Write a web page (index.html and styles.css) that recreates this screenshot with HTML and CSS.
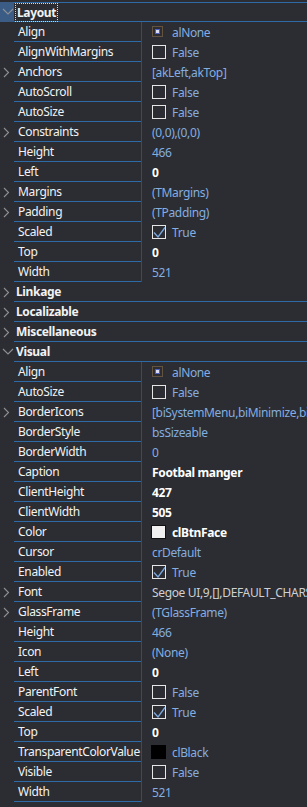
FILE: index.html
```html
<!DOCTYPE html>
<html>
<head>
<meta charset="utf-8">
<link rel="stylesheet" href="styles.css">
</head>
<body>
<div class="inspector">
  <div class="cat first selected">
    <div class="gutter"><svg class="chev" width="12" height="8" viewBox="0 0 12 8"><polyline points="1,1 6,6 11,1"/></svg></div>
    <div class="cat-name"><span class="focus">Layout</span></div>
  </div>

  <div class="row"><div class="gutter"></div><div class="name">Align</div><div class="value"><svg class="align-ic" width="12" height="12" viewBox="0 0 12 12"><rect x="0.5" y="0.5" width="10" height="10" class="dots"/><rect x="3.5" y="3.5" width="4" height="4" class="core"/></svg><span>alNone</span></div></div>
  <div class="row"><div class="gutter"></div><div class="name">AlignWithMargins</div><div class="value"><span class="cb"></span><span>False</span></div></div>
  <div class="row"><div class="gutter"><svg class="chev" width="7" height="11" viewBox="0 0 7 11"><polyline points="1,1 5.5,5.5 1,10"/></svg></div><div class="name">Anchors</div><div class="value"><span>[akLeft,akTop]</span></div></div>
  <div class="row"><div class="gutter"></div><div class="name">AutoScroll</div><div class="value"><span class="cb"></span><span>False</span></div></div>
  <div class="row"><div class="gutter"></div><div class="name">AutoSize</div><div class="value"><span class="cb"></span><span>False</span></div></div>
  <div class="row"><div class="gutter"><svg class="chev" width="7" height="11" viewBox="0 0 7 11"><polyline points="1,1 5.5,5.5 1,10"/></svg></div><div class="name">Constraints</div><div class="value"><span>(0,0),(0,0)</span></div></div>
  <div class="row"><div class="gutter"></div><div class="name">Height</div><div class="value"><span>466</span></div></div>
  <div class="row"><div class="gutter"></div><div class="name">Left</div><div class="value"><span class="bold">0</span></div></div>
  <div class="row"><div class="gutter"><svg class="chev" width="7" height="11" viewBox="0 0 7 11"><polyline points="1,1 5.5,5.5 1,10"/></svg></div><div class="name">Margins</div><div class="value"><span>(TMargins)</span></div></div>
  <div class="row"><div class="gutter"><svg class="chev" width="7" height="11" viewBox="0 0 7 11"><polyline points="1,1 5.5,5.5 1,10"/></svg></div><div class="name">Padding</div><div class="value"><span>(TPadding)</span></div></div>
  <div class="row"><div class="gutter"></div><div class="name">Scaled</div><div class="value"><span class="cb"><svg width="14" height="14" viewBox="0 0 14 14"><polyline points="2,7.5 6,12 13,2.5" class="tick"/></svg></span><span>True</span></div></div>
  <div class="row"><div class="gutter"></div><div class="name">Top</div><div class="value"><span class="bold">0</span></div></div>
  <div class="row"><div class="gutter"></div><div class="name">Width</div><div class="value"><span>521</span></div></div>

  <div class="cat"><div class="gutter"><svg class="chev" width="7" height="11" viewBox="0 0 7 11"><polyline points="1,1 5.5,5.5 1,10"/></svg></div><div class="cat-name">Linkage</div></div>
  <div class="cat"><div class="gutter"><svg class="chev" width="7" height="11" viewBox="0 0 7 11"><polyline points="1,1 5.5,5.5 1,10"/></svg></div><div class="cat-name">Localizable</div></div>
  <div class="cat"><div class="gutter"><svg class="chev" width="7" height="11" viewBox="0 0 7 11"><polyline points="1,1 5.5,5.5 1,10"/></svg></div><div class="cat-name">Miscellaneous</div></div>
  <div class="cat"><div class="gutter"><svg class="chev" width="12" height="8" viewBox="0 0 12 8"><polyline points="1,1 6,6 11,1"/></svg></div><div class="cat-name">Visual</div></div>

  <div class="row"><div class="gutter"></div><div class="name">Align</div><div class="value"><svg class="align-ic" width="12" height="12" viewBox="0 0 12 12"><rect x="0.5" y="0.5" width="10" height="10" class="dots"/><rect x="3.5" y="3.5" width="4" height="4" class="core"/></svg><span>alNone</span></div></div>
  <div class="row"><div class="gutter"></div><div class="name">AutoSize</div><div class="value"><span class="cb"></span><span>False</span></div></div>
  <div class="row"><div class="gutter"><svg class="chev" width="7" height="11" viewBox="0 0 7 11"><polyline points="1,1 5.5,5.5 1,10"/></svg></div><div class="name">BorderIcons</div><div class="value"><span>[biSystemMenu,biMinimize,biMaximize]</span></div></div>
  <div class="row"><div class="gutter"></div><div class="name">BorderStyle</div><div class="value"><span>bsSizeable</span></div></div>
  <div class="row"><div class="gutter"></div><div class="name">BorderWidth</div><div class="value"><span>0</span></div></div>
  <div class="row"><div class="gutter"></div><div class="name">Caption</div><div class="value"><span class="bold">Footbal manger</span></div></div>
  <div class="row"><div class="gutter"></div><div class="name">ClientHeight</div><div class="value"><span class="bold">427</span></div></div>
  <div class="row"><div class="gutter"></div><div class="name">ClientWidth</div><div class="value"><span class="bold">505</span></div></div>
  <div class="row"><div class="gutter"></div><div class="name">Color</div><div class="value"><span class="swatch light"></span><span class="bold">clBtnFace</span></div></div>
  <div class="row"><div class="gutter"></div><div class="name">Cursor</div><div class="value"><span>crDefault</span></div></div>
  <div class="row"><div class="gutter"></div><div class="name">Enabled</div><div class="value"><span class="cb"><svg width="14" height="14" viewBox="0 0 14 14"><polyline points="2,7.5 6,12 13,2.5" class="tick"/></svg></span><span>True</span></div></div>
  <div class="row"><div class="gutter"><svg class="chev" width="7" height="11" viewBox="0 0 7 11"><polyline points="1,1 5.5,5.5 1,10"/></svg></div><div class="name">Font</div><div class="value"><span class="plain">Segoe UI,9,[],DEFAULT_CHARSET,clWindowText</span></div></div>
  <div class="row"><div class="gutter"><svg class="chev" width="7" height="11" viewBox="0 0 7 11"><polyline points="1,1 5.5,5.5 1,10"/></svg></div><div class="name">GlassFrame</div><div class="value"><span>(TGlassFrame)</span></div></div>
  <div class="row"><div class="gutter"></div><div class="name">Height</div><div class="value"><span>466</span></div></div>
  <div class="row"><div class="gutter"></div><div class="name">Icon</div><div class="value"><span>(None)</span></div></div>
  <div class="row"><div class="gutter"></div><div class="name">Left</div><div class="value"><span class="bold">0</span></div></div>
  <div class="row"><div class="gutter"></div><div class="name">ParentFont</div><div class="value"><span class="cb"></span><span>False</span></div></div>
  <div class="row"><div class="gutter"></div><div class="name">Scaled</div><div class="value"><span class="cb"><svg width="14" height="14" viewBox="0 0 14 14"><polyline points="2,7.5 6,12 13,2.5" class="tick"/></svg></span><span>True</span></div></div>
  <div class="row"><div class="gutter"></div><div class="name">Top</div><div class="value"><span class="bold">0</span></div></div>
  <div class="row"><div class="gutter"></div><div class="name">TransparentColorValue</div><div class="value"><span class="swatch dark"></span><span>clBlack</span></div></div>
  <div class="row"><div class="gutter"></div><div class="name">Visible</div><div class="value"><span class="cb"></span><span>False</span></div></div>
  <div class="row last"><div class="gutter"></div><div class="name">Width</div><div class="value"><span>521</span></div></div>
</div>
</body>
</html>
```

FILE: styles.css
```css
html, body {
  margin: 0;
  padding: 0;
  background: #2b2d32;
  width: 307px;
  height: 807px;
  overflow: hidden;
}

.inspector {
  padding-top: 2px;
  font-family: "Noto Sans", "Open Sans", sans-serif;
  font-size: 12px;
  letter-spacing: -0.35px;
  color: #f2f2f2;
}

.row, .cat {
  display: flex;
  height: 20px;
}

.gutter {
  width: 14px;
  flex: none;
  display: flex;
  align-items: center;
  justify-content: flex-start;
  padding-left: 3px;
  box-sizing: border-box;
}

.chev {
  display: block;
  fill: none;
  stroke: #8e9096;
  stroke-width: 1.1;
}

.cat .gutter .chev[width="12"] {
  margin-left: -1px;
}

.cat-name {
  flex: 1;
  border-bottom: 1px solid #2e6aa6;
  box-sizing: border-box;
  font-weight: bold;
  padding-left: 2px;
  display: flex;
  align-items: center;
  line-height: 16px;
}

.cat.first .cat-name {
  border-top: 1px solid #2e6aa6;
}

.cat.selected .gutter {
  background: #3a5c85;
}

.focus {
  outline: 1px dotted #d8d8d8;
  outline-offset: 0;
  padding: 1px 1px 0 1px;
  line-height: 16px;
}

.name {
  width: 127px;
  flex: none;
  border-bottom: 1px solid #2e6aa6;
  box-sizing: border-box;
  padding-left: 4px;
  display: flex;
  align-items: center;
  white-space: nowrap;
  overflow: hidden;
}

.value {
  flex: 1;
  min-width: 0;
  border-left: 1px solid #46484e;
  padding-left: 10px;
  display: flex;
  align-items: center;
  gap: 6px;
  white-space: nowrap;
  overflow: hidden;
  color: #84ade0;
}

.bold {
  font-weight: bold;
  color: #ffffff;
}

.plain {
  color: #cfd0d3;
}

.cb {
  width: 14px;
  height: 14px;
  flex: none;
  border: 1px solid #e6e6e6;
  box-sizing: border-box;
  position: relative;
}

.cb svg {
  position: absolute;
  left: -1px;
  top: -1px;
  overflow: visible;
}

.tick {
  fill: none;
  stroke: #7aa8e0;
  stroke-width: 1.3;
}

.align-ic {
  flex: none;
  margin-right: 2px;
}

.align-ic .dots {
  fill: none;
  stroke: #9c7a4c;
  stroke-width: 1;
  stroke-dasharray: 1 1;
}

.align-ic .core {
  fill: #dcdcf4;
  stroke: #4f5fbf;
  stroke-width: 1;
}

.swatch {
  width: 15px;
  height: 14px;
  flex: none;
  box-sizing: border-box;
  margin-left: -1px;
}

.swatch.light {
  background: #f0f0f0;
  border: 1px solid #111111;
}

.swatch.dark {
  background: #000000;
}
```
